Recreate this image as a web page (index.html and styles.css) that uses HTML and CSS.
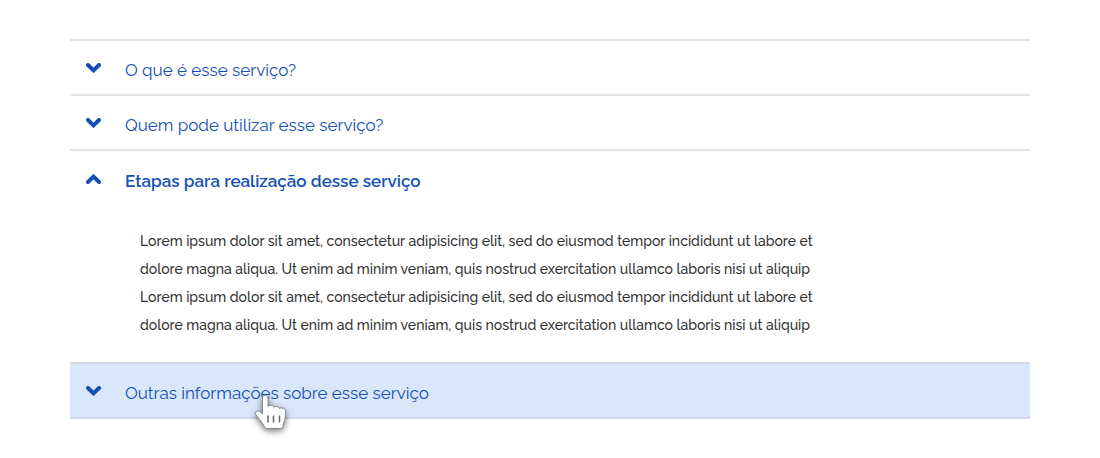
FILE: index.html
```html
<!DOCTYPE html>
<html lang="pt-BR">
<head>
<meta charset="utf-8">
<meta name="viewport" content="width=device-width, initial-scale=1">
<title>Serviço</title>
<link rel="stylesheet" href="styles.css">
</head>
<body>
<main class="accordion">
  <section class="item">
    <button class="header" type="button" aria-expanded="false">
      <svg class="chevron" viewBox="0 0 16 10" aria-hidden="true"><path d="M2 2 7.500 7.400 13 2"/></svg>
      <span class="title">O que é esse serviço?</span>
    </button>
  </section>
  <section class="item">
    <button class="header" type="button" aria-expanded="false">
      <svg class="chevron" viewBox="0 0 16 10" aria-hidden="true"><path d="M2 2 7.500 7.400 13 2"/></svg>
      <span class="title">Quem pode utilizar esse serviço?</span>
    </button>
  </section>
  <section class="item item-open">
    <button class="header" type="button" aria-expanded="true" aria-controls="etapas">
      <svg class="chevron" viewBox="0 0 16 10" aria-hidden="true"><path d="M2 8 7.500 2.600 13 8"/></svg>
      <span class="title">Etapas para realização desse serviço</span>
    </button>
    <div class="panel" id="etapas">
      <p class="text">Lorem ipsum dolor sit amet, consectetur adipisicing elit, sed do eiusmod tempor incididunt ut labore et<br>dolore magna aliqua. Ut enim ad minim veniam, quis nostrud exercitation ullamco laboris nisi ut aliquip<br>Lorem ipsum dolor sit amet, consectetur adipisicing elit, sed do eiusmod tempor incididunt ut labore et<br>dolore magna aliqua. Ut enim ad minim veniam, quis nostrud exercitation ullamco laboris nisi ut aliquip</p>
    </div>
  </section>
  <section class="item item-hover">
    <button class="header" type="button" aria-expanded="false">
      <svg class="chevron" viewBox="0 0 16 10" aria-hidden="true"><path d="M2 2 7.500 7.400 13 2"/></svg>
      <span class="title">Outras informações sobre esse serviço</span>
    </button>
    <svg class="cursor" viewBox="0 0 32 36" aria-hidden="true">
      <path class="hand" d="M7.500 20V4C7.500 .3 13 .3 13 4V12.500C14 10.900 18.500 11 18.900 13.300C20 11.800 24 12.200 24.300 14.500C26 13.300 30.500 13.800 30.500 17.500C30.500 22 30 26.500 28.500 29.500L28 32.500Q27.600 34.500 25.500 34.500H12Q10 34.500 9.300 32.500C8 29.500 5.500 26.800 3.800 24.500L1 21C-.6 18.500 1.500 16.200 4 17.300C5.500 18 6.500 19 7.500 20Z"/>
      <path class="fingers" d="M13 21.500v7M18.500 21.500v7M24.500 21.500v7"/>
    </svg>
  </section>
</main>
</body>
</html>
```
FILE: styles.css
```css
* {
  box-sizing: border-box;
}

body {
  margin: 0;
  background: #fff;
  color: #333;
  font-family: Raleway, Lato, sans-serif;
}

.accordion {
  margin: 39px 70px;
}

.item {
  position: relative;
  border-top: 2px solid #e4e4e4;
}

.header {
  display: flex;
  align-items: center;
  gap: 23px;
  width: 100%;
  padding: 17px 16px 12px;
  border: 0;
  background: transparent;
  color: #1351b4;
  font: inherit;
  font-size: 17px;
  line-height: 24px;
  text-align: left;
  cursor: pointer;
}

.chevron {
  flex: none;
  width: 16px;
  height: 10px;
  margin-bottom: 4px;
  fill: none;
  stroke: #1351b4;
  stroke-width: 4;
  stroke-linecap: round;
}

.item-open .header {
  padding-top: 18px;
  font-weight: 600;
}

.panel {
  padding: 22px 70px 23px;
}

.text {
  margin: 0;
  font-size: 14px;
  font-weight: 500;
  line-height: 28px;
}

.item-hover {
  background: #dae7fa;
  border-top-color: #d1d9e5;
  border-bottom: 2px solid #d1d9e5;
}

.cursor {
  position: absolute;
  left: 185px;
  top: 30px;
  width: 32px;
  height: 36px;
  overflow: visible;
  pointer-events: none;
  filter: drop-shadow(0 2px 3px rgba(0, 0, 0, 0.55));
}

.hand {
  fill: #fff;
  stroke: #888;
  stroke-width: 1;
}

.fingers {
  fill: none;
  stroke: #666;
  stroke-width: 1.500;
}
```
